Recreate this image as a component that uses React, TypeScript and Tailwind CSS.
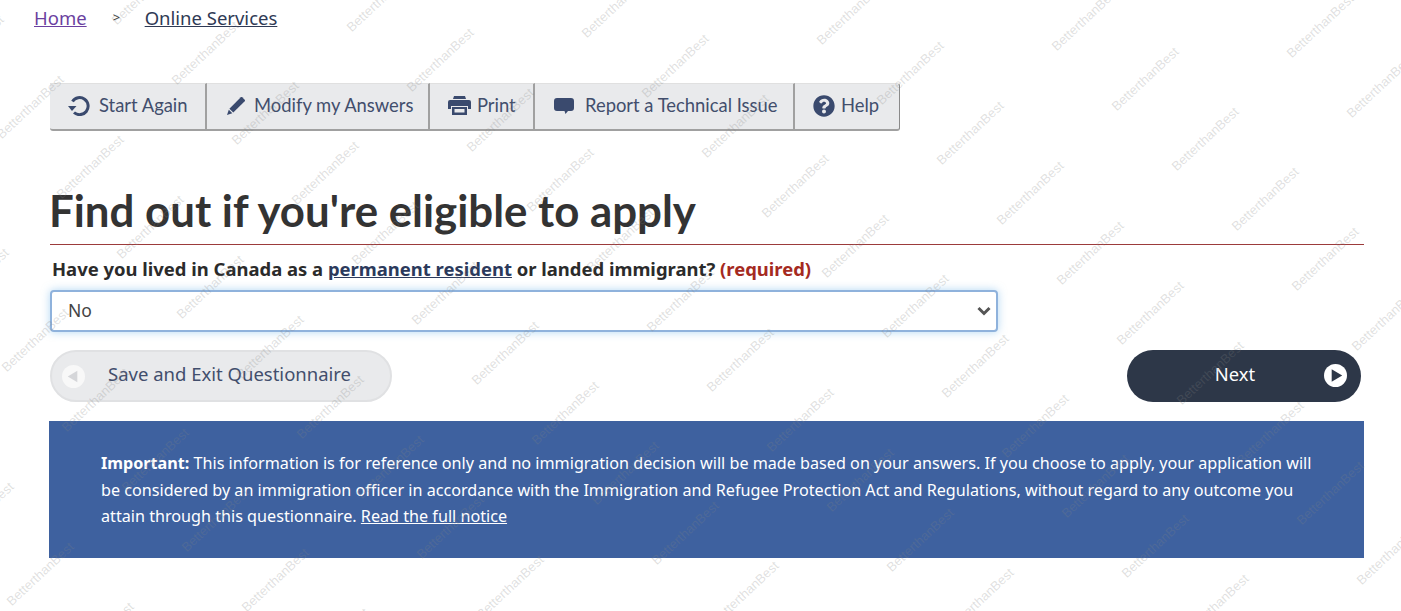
import React from "react";
import { FaQuestionCircle } from "react-icons/fa";

function Watermarks() {
  const marks: { x: number; y: number }[] = [];
  for (let i = -8; i < 4; i++) {
    for (let j = -6; j < 12; j++) {
      const x = 1118 + i * 235 + j * 60;
      const y = 113 + i * 6.5 + j * 60;
      if (x > -110 && x < 1410 && y > -20 && y < 710) marks.push({ x, y });
    }
  }
  return (
    <div className="absolute inset-0 overflow-hidden pointer-events-none">
      {marks.map((m, k) => (
        <span
          key={k}
          className="absolute whitespace-nowrap text-[13px] leading-none text-[rgba(130,130,130,0.25)] origin-bottom-left -rotate-[43deg] font-['Liberation_Sans',sans-serif]"
          style={{ left: m.x, top: m.y - 13 }}
        >
          BetterthanBest
        </span>
      ))}
    </div>
  );
}

function ToolButton({ icon, label, className }: { icon: React.ReactNode; label: string; className: string }) {
  return (
    <button className={`flex h-full items-center bg-[#e9eaec] border-t border-t-[#e0e0e0] border-b-2 border-b-[#a0a0a0] border-r-2 border-r-[#a0a0a0] pb-[2px] text-[18.400px] text-[#424e6c] ${className}`}>
      {icon}
      <span>{label}</span>
    </button>
  );
}

export default function App() {
  return (
    <div className="relative h-[611px] w-[1401px] overflow-hidden bg-white font-['Noto_Sans',sans-serif]">
      <nav className="flex items-center h-[36px] pl-[34px] text-[18.500px]">
        <a className="underline text-[#6b3fa0]">Home</a>
        <span className="ml-[26px] w-[32px] text-[13px] text-[#333]">&gt;</span>
        <a className="underline text-[#2f3a55]">Online Services</a>
      </nav>

      <div className="ml-[50px] mt-[47px] flex h-[48px] w-[850px] font-['Lato',sans-serif]">
        <ToolButton
          className="w-[157px] rounded-bl-[3px] pl-[18px]"
          label="Start Again"
          icon={
            <svg viewBox="0 0 22 20" className="mr-[9px] h-[20px] w-[22px] text-[#3a4a6e]" fill="none" stroke="currentColor">
              <path d="M4.500 5.500A8.500 8.500 0 1 1 6 16.500" strokeWidth="3" />
              <path d="M0 10h8.500L4 15z" fill="currentColor" stroke="none" />
            </svg>
          }
        />
        <ToolButton
          className="w-[223px] pl-[20px]"
          label="Modify my Answers"
          icon={
            <svg viewBox="0 0 18 18" className="mr-[9px] h-[18px] w-[18px] text-[#3a4a6e]" fill="currentColor">
              <path d="M13.800 0.300a1 1 0 0 1 1.400 0l2.500 2.500a1 1 0 0 1 0 1.400L6.300 15.600 2.400 11.700z" />
              <path d="M1.800 12.700l3.500 3.500L0 18z" />
            </svg>
          }
        />
        <ToolButton
          className="w-[105px] pl-[18px]"
          label="Print"
          icon={
            <svg viewBox="0 0 23 19" className="mr-[6px] h-[19px] w-[23px] text-[#3a4a6e]" fill="currentColor">
              <path d="M6 0h11l1 3H5z" />
              <path d="M2 4h19a2 2 0 0 1 2 2v7h-3v-3H3v3H0V6a2 2 0 0 1 2-2z" />
              <path fillRule="evenodd" d="M4 11h15v8H4zM6.500 13v3.500h10V13z" />
            </svg>
          }
        />
        <ToolButton
          className="w-[260px] pl-[19px]"
          label="Report a Technical Issue"
          icon={
            <svg viewBox="0 0 20 16" className="mr-[11px] h-[16px] w-[20px] text-[#3a4a6e]" fill="currentColor">
              <path d="M3 0h14a3 3 0 0 1 3 3v7a3 3 0 0 1-3 3h-3l-2.500 3-1-3H3a3 3 0 0 1-3-3V3a3 3 0 0 1 3-3z" />
            </svg>
          }
        />
        <button className="flex h-full w-[105px] items-center rounded-br-[3px] rounded-tr-[3px] bg-[#e9eaec] border-t border-t-[#e0e0e0] border-b-2 border-b-[#a0a0a0] border-r border-r-[#8a8a8a] pb-[2px] pl-[18px] text-[18.400px] text-[#424e6c]">
          <FaQuestionCircle className="mr-[6px] h-[22px] w-[22px] text-[#3a4a6e]" />
          <span>Help</span>
        </button>
      </div>

      <div className="ml-[50px] mr-[37px] mt-[48px] border-b border-b-[#9c3b3b] pb-[2px]">
        <h1 className="-ml-[1px] h-[63px] text-[43.800px] leading-[63px] font-bold text-[#333] font-['Lato',sans-serif]">Find out if you're eligible to apply</h1>
      </div>

      <div className="ml-[52px] mt-[11px] text-[18.450px] leading-[26px] font-bold text-[#2b2b2b]">
        Have you lived in Canada as a <a className="underline text-[#2c3a5c]">permanent resident</a> or landed immigrant? <span className="text-[#a52a1f]">(required)</span>
      </div>

      <div className="relative ml-[50px] mt-[8px] h-[42px] w-[948px]">
        <select className="h-full w-full appearance-none rounded-[4px] border-2 border-[#8fb2dc] bg-white pb-[2px] pl-[16px] text-[17.500px] text-[#444] shadow-[0_0_8px_rgba(102,175,233,0.5)] outline-none">
          <option>No</option>
        </select>
        <svg viewBox="0 0 14 10" className="pointer-events-none absolute right-[7px] top-[16px] h-[10px] w-[14px] text-[#555]" fill="none" stroke="currentColor" strokeWidth="3">
          <path d="M1.500 2l5.500 5.500L12.500 2" />
        </svg>
      </div>

      <div className="ml-[50px] mr-[40px] mt-[18px] flex justify-between">
        <button className="flex h-[52px] w-[342px] items-center rounded-[26px] border-2 border-[#e0e1e3] bg-[#e9eaec] pb-[4px] pl-[10px] text-[18.500px] text-[#424e6c]">
          <svg viewBox="0 0 24 24" className="mt-[4px] h-[23px] w-[23px]">
            <circle cx="12" cy="12" r="12" fill="#f8f8f8" />
            <path d="M6 12l10-6v12z" fill="#d5d6d9" />
          </svg>
          <span className="ml-[23px]">Save and Exit Questionnaire</span>
        </button>
        <button className="relative flex h-[52px] w-[234px] items-center justify-center rounded-[26px] bg-[#2d3748] pb-[4px] text-[18.400px] text-white">
          <span className="mr-[18px]">Next</span>
          <svg viewBox="0 0 24 24" className="absolute right-[14px] top-[14px] h-[23px] w-[23px]">
            <circle cx="12" cy="12" r="12" fill="#fff" />
            <path d="M8 5.500l11 6.500-11 6.500z" fill="#2d3748" />
          </svg>
        </button>
      </div>

      <div className="ml-[49px] mr-[37px] mt-[19px] h-[137px] bg-[#3e619f] pl-[52px] pr-[50px] pt-[29px] text-[16.160px] leading-[26.500px] text-white">
        <strong>Important:</strong> This information is for reference only and no immigration decision will be made based on your answers. If you choose to apply, your application will be considered by an immigration officer in accordance with the Immigration and Refugee Protection Act and Regulations, without regard to any outcome you attain through this questionnaire. <a className="underline">Read the full notice</a>
      </div>

      <Watermarks />
    </div>
  );
}
